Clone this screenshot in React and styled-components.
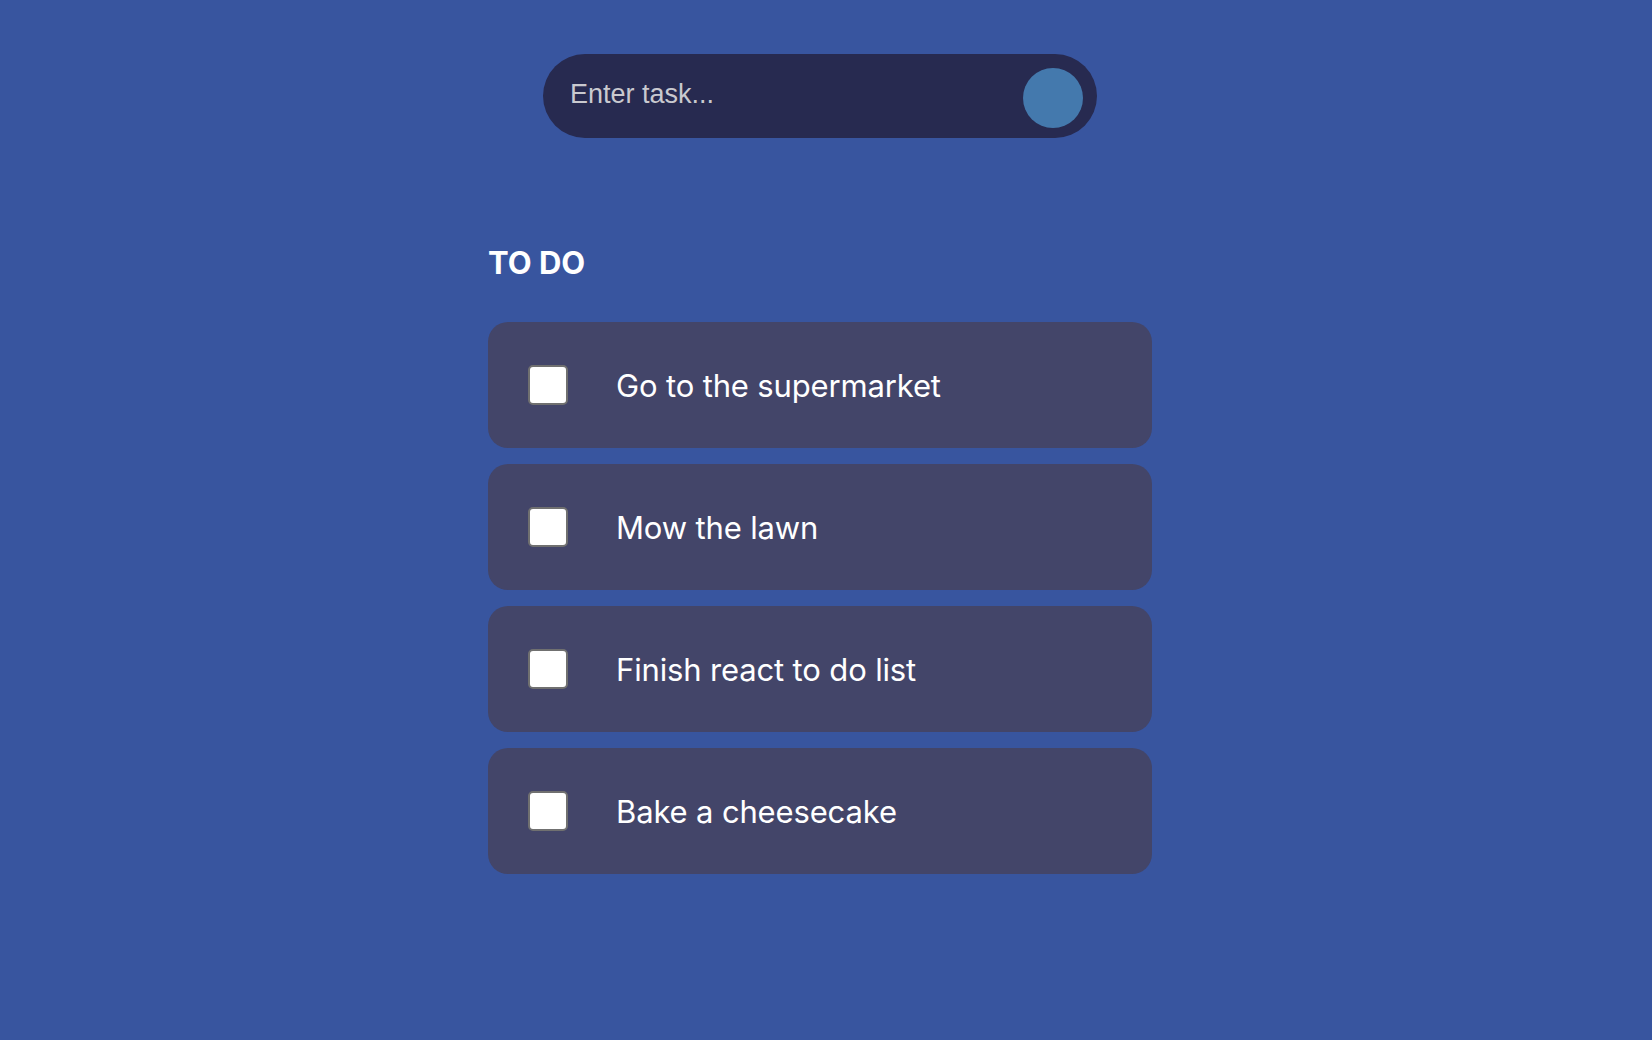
import React from "react";
import styled, { createGlobalStyle } from "styled-components";

const GlobalStyle = createGlobalStyle`
  html, body { margin: 0; padding: 0; }
  body { background: #38559f; font-family: Inter, "Noto Sans", sans-serif; }
`;

const Page = styled.div`
  min-height: 100vh;
  box-sizing: border-box;
  display: flex;
  flex-direction: column;
  align-items: center;
  padding: 54px 12px 0 0;
  background: #38559f;
`;

const InputBar = styled.form`
  width: 554px;
  height: 84px;
  box-sizing: border-box;
  border-radius: 42px;
  background: #272a50;
  display: flex;
  align-items: center;
  padding: 4px 14px 0 27px;
`;

const TaskInput = styled.input`
  flex: 1;
  min-width: 0;
  padding: 0;
  background: transparent;
  border: none;
  outline: none;
  color: #ffffff;
  font-family: "Liberation Sans", Arial, sans-serif;
  font-size: 27px;
  margin-top: -8px;
  &::placeholder { color: #c9c9cf; }
`;

const AddButton = styled.button`
  width: 60px;
  height: 60px;
  border-radius: 50%;
  border: none;
  padding: 0;
  background: #4479ad;
  flex-shrink: 0;
`;

const Section = styled.section`
  width: 664px;
  margin-top: 107px;
  display: flex;
  flex-direction: column;
`;

const Heading = styled.h2`
  margin: 0 0 41px;
  font-family: Inter, "Noto Sans", sans-serif;
  font-weight: 700;
  font-size: 31px;
  line-height: 36px;
  color: #ffffff;
`;

const List = styled.ul`
  list-style: none;
  margin: 0;
  padding: 0;
  display: flex;
  flex-direction: column;
  gap: 16px;
`;

const Card = styled.li`
  height: 126px;
  box-sizing: border-box;
  border-radius: 20px;
  background: #434569;
  display: flex;
  align-items: center;
  gap: 48px;
  padding: 0 40px;
`;

const Check = styled.input.attrs({ type: "checkbox" })`
  appearance: none;
  margin: 0;
  width: 40px;
  height: 40px;
  box-sizing: border-box;
  border: 2.5px solid #707070;
  border-radius: 5px;
  background: #ffffff;
  flex-shrink: 0;
`;

const TaskText = styled.span`
  font-family: Inter, "Noto Sans", sans-serif;
  font-size: 31px;
  font-weight: 400;
  color: #ffffff;
  letter-spacing: -0.15px;
`;

const tasks = [
  "Go to the supermarket",
  "Mow the lawn",
  "Finish react to do list",
  "Bake a cheesecake",
];

export default function App() {
  return (
    <>
      <GlobalStyle />
      <Page>
        <InputBar onSubmit={(e) => e.preventDefault()}>
          <TaskInput placeholder="Enter task..." />
          <AddButton type="submit" aria-label="Add task" />
        </InputBar>
        <Section>
          <Heading>TO DO</Heading>
          <List>
            {tasks.map((t) => (
              <Card key={t}>
                <Check />
                <TaskText>{t}</TaskText>
              </Card>
            ))}
          </List>
        </Section>
      </Page>
    </>
  );
}
